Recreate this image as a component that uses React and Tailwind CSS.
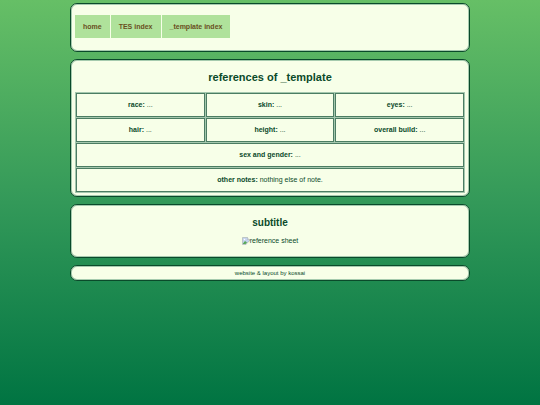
const links = ['home', 'TES index', '_template index']

const rows = [
  [
    { label: 'race', value: '...' },
    { label: 'skin', value: '...' },
    { label: 'eyes', value: '...' },
  ],
  [
    { label: 'hair', value: '...' },
    { label: 'height', value: '...' },
    { label: 'overall build', value: '...' },
  ],
  [{ label: 'sex and gender', value: '...' }],
  [{ label: 'other notes', value: 'nothing else of note.' }],
]

function Panel({ as: Tag = 'section', className, children }) {
  return (
    <Tag className={`rounded-[7px] border border-[#0a4a2a] bg-[#f7ffe8] ring-1 ring-inset ring-[#a5cbae] ${className}`}>
      {children}
    </Tag>
  )
}

function BrokenImageIcon() {
  return (
    <svg aria-hidden="true" className="h-2 w-2" viewBox="0 0 16 16">
      <path d="M1 1h10l4 4v3l-4 3-3 4H1z" fill="#c3d3ee" stroke="#9aa3a3" />
      <path d="M11 1v4h4" fill="#fff" stroke="#9aa3a3" />
      <path d="M2 13l4-5 4 3-3 3H2z" fill="#57a957" />
      <circle cx="5" cy="5" r="1.5" fill="#fff" />
    </svg>
  )
}

export default function App() {
  return (
    <div className="min-h-screen bg-linear-to-b/srgb from-[#66bf66] via-[#339959] to-[#007442] px-[70px] py-[3px] font-['Liberation_Sans',Arial,sans-serif] text-[7px] leading-2 text-[#0a4a2a]">
      <div className="flex flex-col gap-[7px]">
        <Panel as="nav" className="px-1 pt-[11px] pb-[13px]">
          <ul className="flex gap-px">
            {links.map((link) => (
              <li key={link}>
                <a href="#" className="block bg-[#afe29b] px-2 py-[7px] leading-[9px] font-bold text-[#694f1d]">
                  {link}
                </a>
              </li>
            ))}
          </ul>
        </Panel>

        <Panel as="main" className="px-1 pt-2.5 pb-[3px]">
          <h1 className="text-center text-[11px] leading-[14px] font-bold">references of _template</h1>
          <table className="mt-2 w-full table-fixed border-separate border-spacing-px text-center">
            <tbody>
              {rows.map((row) => (
                <tr key={row[0].label}>
                  {row.map(({ label, value }) => (
                    <td
                      key={label}
                      colSpan={row.length === 1 ? 3 : 1}
                      className="border border-[#4c7d63] px-1 py-[7px] ring-1 ring-[#a5c8ae]"
                    >
                      <b>{label}:</b> {value}
                    </td>
                  ))}
                </tr>
              ))}
            </tbody>
          </table>
        </Panel>

        <Panel className="px-1 pt-3 pb-3 text-center">
          <h2 className="text-[10px] leading-3 font-bold">subtitle</h2>
          <div className="mt-2 flex justify-center">
            <BrokenImageIcon />
            <span>reference sheet</span>
          </div>
        </Panel>

        <Panel as="footer" className="px-1 py-[3px] text-center text-[6px] leading-2">
          website &amp; layout by kossai
        </Panel>
      </div>
    </div>
  )
}
